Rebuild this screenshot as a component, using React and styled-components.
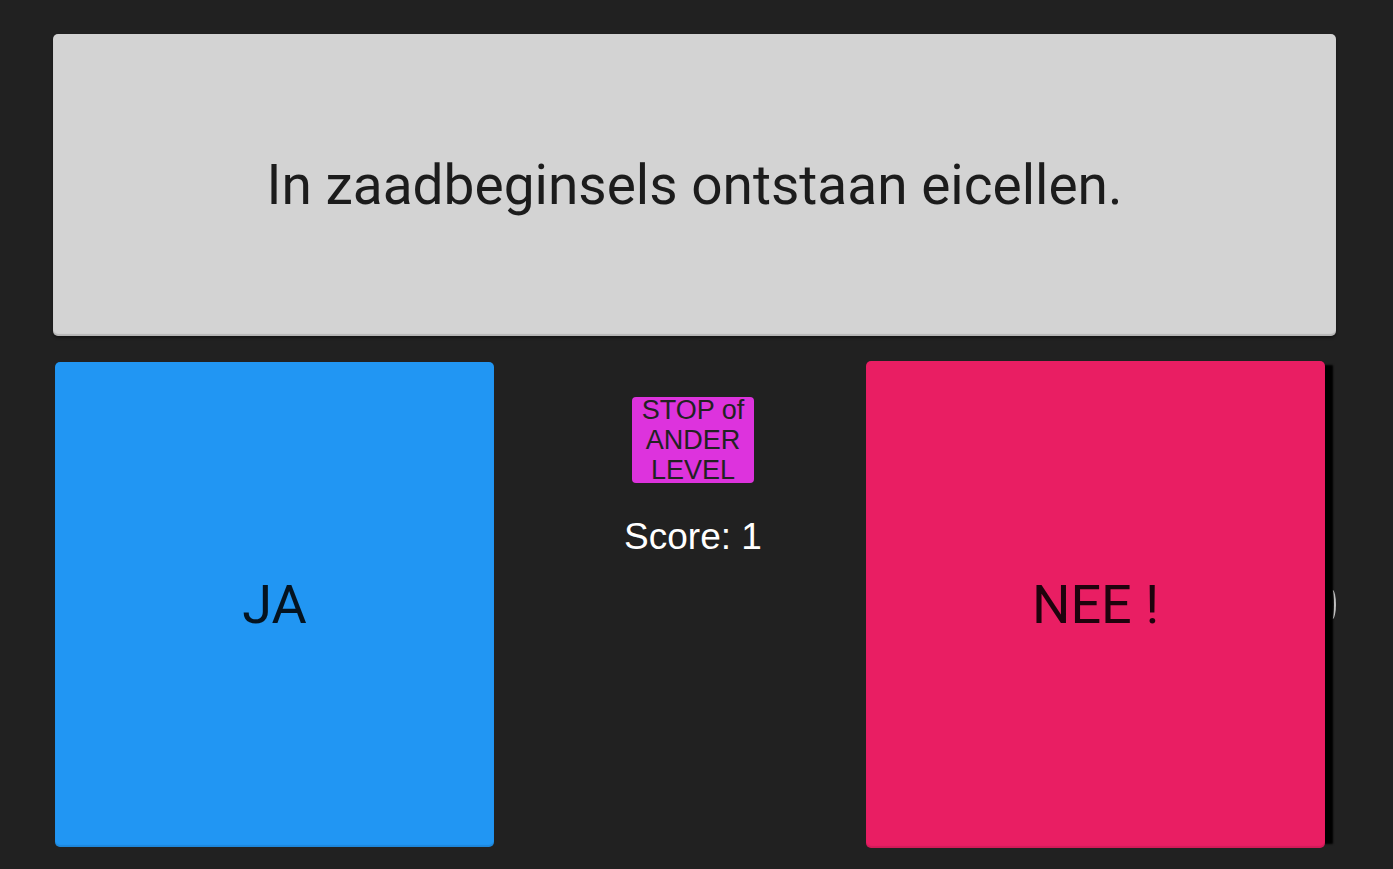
import React from 'react';
import styled, { createGlobalStyle } from 'styled-components';

const GlobalStyle = createGlobalStyle`
    html, body {
        margin: 0;
        background-color: #212121;
    }
    body {
        font-family: Roboto, "Liberation Sans", sans-serif;
    }
`;

const Root = styled.div`
    padding: 34px 57px 0 53px;
    min-height: 835px;
    background-color: #212121;
`;

const QuestionCard = styled.div`
    height: 302px;
    background-color: #d3d3d3;
    border-radius: 5px;
    box-shadow: inset 0 -2px 1px rgba(0, 0, 0, 0.14), 0 2px 3px rgba(0, 0, 0, 0.4);
    display: flex;
    align-items: center;
    justify-content: center;
    font-family: Roboto, sans-serif;
    font-size: 55px;
    color: rgba(0, 0, 0, 0.87);
`;

const AnswerRow = styled.div`
    display: flex;
    align-items: flex-start;
    margin-top: 25px;
`;

const AnswerButton = styled.button`
    width: ${p => p.$width}px;
    height: ${p => p.$height}px;
    margin-top: ${p => p.$offset || 0}px;
    margin-left: ${p => p.$left || 0}px;
    border: none;
    border-radius: 5px;
    background-color: ${p => p.$color};
    display: flex;
    align-items: center;
    justify-content: center;
    font-family: Roboto, sans-serif;
    font-size: 54px;
    color: rgba(0, 0, 0, 0.87);
    cursor: pointer;
    padding: 0;
    box-shadow: inset 0 -2px 1px rgba(0, 0, 0, 0.1)${p => p.$shadow ? ', 12px 0 2px -4px #000' : ''};
`;

const MiddleColumn = styled.div`
    width: 346px;
    padding: 36px 0 0 26px;
    display: flex;
    flex-direction: column;
    align-items: center;
`;

const StopButton = styled.button`
    width: 122px;
    height: 86px;
    border: none;
    border-radius: 4px;
    background-color: #dd33dd;
    color: #222;
    font-family: "Liberation Sans", Arial, sans-serif;
    font-size: 27px;
    line-height: 30px;
    padding: 0;
    display: flex;
    flex-direction: column;
    align-items: center;
    justify-content: center;
    cursor: pointer;
`;

const Score = styled.div`
    margin-top: 33px;
    font-family: "Liberation Sans", Arial, sans-serif;
    font-size: 37px;
    color: #fff;
`;

const NeeWrap = styled.div`
    position: relative;
`;

const Ring = styled.span`
    position: absolute;
    left: calc(100% + 4px);
    top: 229px;
    width: 7px;
    height: 29px;
    border-right: 2px solid rgba(230, 230, 230, 0.8);
    border-radius: 0 50% 50% 0 / 0 50% 50% 0;
    box-sizing: border-box;
`;

const App = () => (
    <Root>
        <GlobalStyle />
        <QuestionCard>In zaadbeginsels ontstaan eicellen.</QuestionCard>
        <AnswerRow>
            <AnswerButton $width={439} $height={485} $offset={1} $left={2} $color="#2196f3">
                JA
            </AnswerButton>
            <MiddleColumn>
                <StopButton>
                    <span>STOP of</span>
                    <span>ANDER</span>
                    <span>LEVEL</span>
                </StopButton>
                <Score>Score: 1</Score>
            </MiddleColumn>
            <NeeWrap>
                <AnswerButton $width={459} $height={487} $color="#e91e63" $shadow>
                    NEE !
                </AnswerButton>
                <Ring />
            </NeeWrap>
        </AnswerRow>
    </Root>
);

export default App;
